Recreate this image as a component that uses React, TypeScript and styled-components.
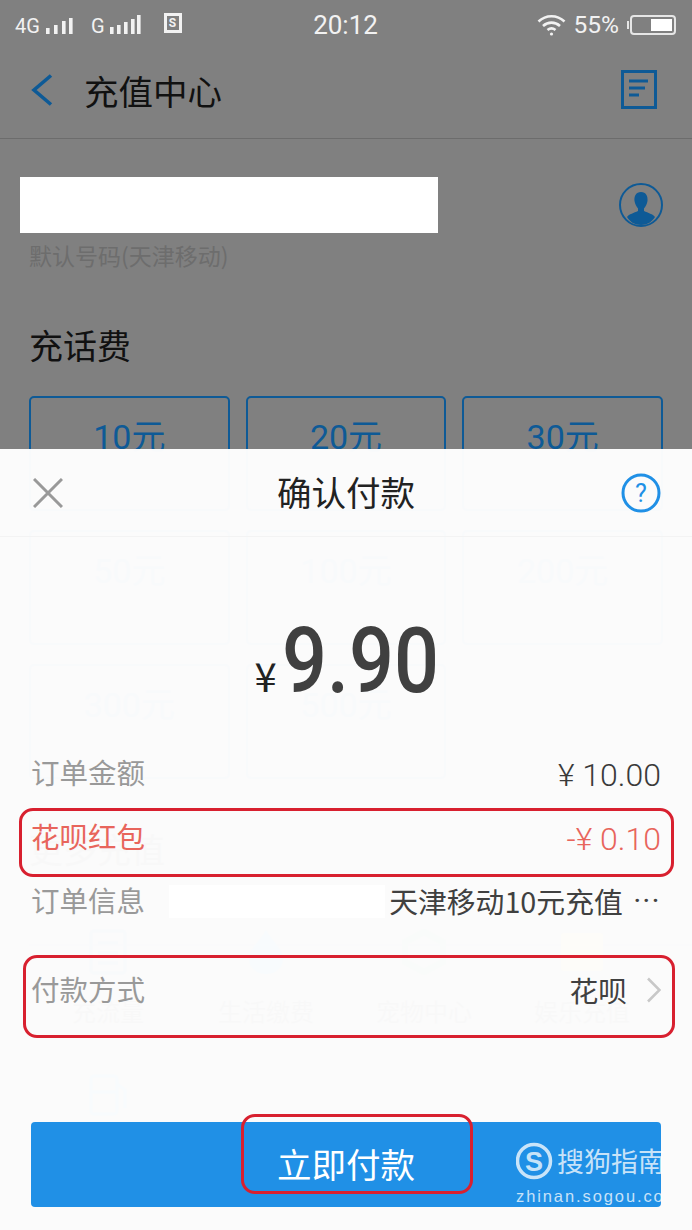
import styled, { createGlobalStyle } from "styled-components";

const cjk = `"Noto Sans CJK SC", "Roboto", sans-serif`;
const latin = `"Roboto", "Noto Sans CJK SC", sans-serif`;

const GlobalStyle = createGlobalStyle`
  html, body {
    margin: 0;
    padding: 0;
    background: #808080;
  }
  * {
    box-sizing: border-box;
  }
`;

const Screen = styled.div`
  position: relative;
  width: 692px;
  height: 1230px;
  overflow: hidden;
  background: #808080;
  font-family: ${cjk};
`;

const StatusBar = styled.div`
  display: grid;
  grid-template-columns: 1fr auto 1fr;
  align-items: center;
  height: 44px;
  padding: 6px 16px 0 15px;
  color: #f2f2f2;
`;

const StatusLeft = styled.div`
  display: flex;
  align-items: center;
`;

const StatusRight = styled.div`
  display: flex;
  align-items: center;
  justify-content: flex-end;
  gap: 8px;
`;

const NetworkLabel = styled.span<{ $gap?: number }>`
  margin-left: ${(p) => p.$gap ?? 0}px;
  margin-top: 1px;
  font-family: ${latin};
  font-size: 20px;
  line-height: 24px;
`;

const Time = styled.span`
  font-family: ${latin};
  font-size: 26px;
  line-height: 30px;
`;

const Percent = styled.span`
  font-family: ${latin};
  font-size: 24.5px;
  line-height: 28px;
`;

const SimBadge = styled.span`
  display: flex;
  align-items: center;
  justify-content: center;
  width: 18px;
  height: 20px;
  margin-left: 23px;
  margin-top: -5px;
  border: 3px solid #f2f2f2;
  font-family: ${latin};
  font-size: 12px;
  font-weight: 700;
  line-height: 1;
`;

const BatteryBody = styled.span`
  display: flex;
  justify-content: flex-end;
  width: 46px;
  height: 20px;
  padding: 2px;
  border: 2px solid #e6e6e6;
  border-radius: 4px;
`;

const BatteryFill = styled.span`
  display: block;
  height: 100%;
  background: #fff;
`;

const Battery = styled.span`
  display: flex;
  align-items: center;
  gap: 1px;
  &::before {
    content: "";
    width: 2px;
    height: 8px;
    background: #e6e6e6;
  }
`;

const Header = styled.div`
  display: flex;
  align-items: center;
  height: 95px;
  padding: 0 35px 3px 31px;
  border-bottom: 1px solid #6c6c6c;
`;

const HeaderTitle = styled.h1`
  flex: 1;
  margin: 0 0 0 31px;
  font-size: 34.5px;
  font-weight: 400;
  line-height: 48px;
  color: #111;
`;

const AccountRow = styled.div`
  display: flex;
  align-items: center;
  justify-content: space-between;
  margin-top: 38px;
  padding: 0 29px 0 20px;
`;

const MaskedNumber = styled.div`
  width: 418px;
  height: 56px;
  background: #fff;
`;

const DefaultHint = styled.p`
  margin: 6px 0 0 29px;
  font-size: 23px;
  line-height: 32px;
  color: #6d6d6d;
`;

const SectionTitle = styled.h2`
  margin: 49px 0 0 29px;
  font-size: 34px;
  font-weight: 400;
  line-height: 50px;
  color: #111;
`;

const AmountGrid = styled.div`
  display: grid;
  grid-template-columns: repeat(3, 1fr);
  grid-auto-rows: 115px;
  gap: 19px 16px;
  margin: 26px 29px 0;
`;

const AmountCard = styled.div`
  display: flex;
  justify-content: center;
  padding-top: 14px;
  border: 2px solid #0e5a96;
  border-radius: 5px;
  font-family: ${latin};
  font-size: 34px;
  line-height: 50px;
  color: #0e5a96;
`;

const MoreTitle = styled(SectionTitle)`
  margin-top: 45px;
`;

const ServiceGrid = styled.div`
  position: relative;
  display: grid;
  grid-template-columns: repeat(4, 158px);
  justify-items: center;
  row-gap: 45px;
  margin: 55px 0 0 29px;

  &::before {
    content: "";
    position: absolute;
    top: 15px;
    left: 0;
    right: -29px;
    height: 2px;
    background: #5f7f9a;
  }
`;

const ServiceItem = styled.div`
  position: relative;
  display: flex;
  flex-direction: column;
  align-items: center;
  gap: 18px;
  font-size: 24px;
  line-height: 36px;
  color: #222;
`;

const Sheet = styled.div`
  position: absolute;
  left: 0;
  right: 0;
  top: 449px;
  bottom: 0;
  display: flex;
  flex-direction: column;
  background: rgba(253, 253, 253, 0.98);
`;

const SheetHeader = styled.div`
  display: grid;
  grid-template-columns: 1fr auto 1fr;
  align-items: center;
  height: 88px;
  padding: 0 31px;
  border-bottom: 1px solid #f3f3f3;
`;

const CloseSlot = styled.div`
  display: flex;
  padding-left: 2px;
`;

const SheetTitle = styled.div`
  padding-bottom: 4px;
  font-size: 34.5px;
  line-height: 48px;
  color: #222;
`;

const HelpSlot = styled.div`
  display: flex;
  justify-content: flex-end;
`;

const Amount = styled.div`
  display: flex;
  align-items: baseline;
  justify-content: center;
  height: 204px;
  padding-top: 70px;
  color: #404040;
`;

const Currency = styled.span`
  font-family: ${cjk};
  font-size: 40px;
  color: #222;
`;

const AmountValue = styled.span`
  display: inline-block;
  width: 156px;
  margin-left: 5px;
  transform: scaleX(0.88);
  transform-origin: left center;
  white-space: nowrap;
  font-family: ${latin};
  font-size: 90px;
  font-weight: 500;
  line-height: 110px;
`;

const Row = styled.div<{ $gap?: number }>`
  display: flex;
  align-items: center;
  justify-content: space-between;
  height: 64px;
  margin-top: ${(p) => p.$gap ?? 0}px;
  padding: 0 31px;
`;

const RowLabel = styled.span<{ $danger?: boolean }>`
  margin-bottom: 2px;
  font-size: 28.5px;
  line-height: 40px;
  color: ${(p) => (p.$danger ? "#e8655c" : "#999")};
`;

const RowValue = styled.span`
  display: flex;
  align-items: center;
  color: #404040;
`;

const Money = styled.span<{ $danger?: boolean }>`
  padding-top: 4px;
  font-family: ${latin};
  font-size: 32px;
  font-weight: 300;
  line-height: 40px;
  color: ${(p) => (p.$danger ? "#e8655c" : "#3a3a3a")};
`;

const MaskedOrder = styled.span`
  width: 216px;
  height: 33px;
  margin-right: 4px;
  background: #fff;
`;

const OrderText = styled.span`
  font-size: 28.8px;
  line-height: 40px;
`;

const Ellipsis = styled.span`
  margin-left: 11px;
  font-family: ${latin};
  font-size: 25px;
  font-weight: 500;
  letter-spacing: 2px;
  line-height: 40px;
`;

const ChevronSlot = styled.span`
  display: flex;
  margin-left: 20px;
`;

const PayButton = styled.button`
  display: flex;
  align-items: center;
  justify-content: center;
  height: 85px;
  margin: 100px 31px 0;
  padding: 0 0 4px;
  border: none;
  border-radius: 4px;
  background: #2090e6;
  color: #fff;
  font-family: ${cjk};
  font-size: 34.5px;
`;

const Callout = styled.div<{ $left: number; $top: number; $width: number; $height: number }>`
  position: absolute;
  left: ${(p) => p.$left}px;
  top: ${(p) => p.$top}px;
  width: ${(p) => p.$width}px;
  height: ${(p) => p.$height}px;
  border: 3px solid #d8202f;
  border-radius: 14px;
`;

const Watermark = styled.div`
  position: absolute;
  left: 516px;
  top: 1142px;
  width: 150px;
  overflow: hidden;
  color: rgba(255, 255, 255, 0.76);
`;

const WatermarkBrand = styled.div`
  display: flex;
  align-items: center;
  gap: 4px;
  white-space: nowrap;
  font-size: 27px;
  line-height: 38px;
`;

const WatermarkUrl = styled.div`
  margin-top: 6px;
  white-space: nowrap;
  font-family: "Liberation Sans", sans-serif;
  font-size: 16.5px;
  letter-spacing: 1.9px;
  line-height: 20px;
`;

const Signal = ({ bars }: { bars: number[][] }) => (
  <svg width="36" height="24" viewBox="0 0 36 24" fill="#f2f2f2">
    {bars.map(([x, h]) => (
      <rect key={x} x={x} y={21 - h} width="3.6" height={h} />
    ))}
  </svg>
);

const Wifi = () => (
  <svg width="29" height="24" viewBox="0 0 29 24" fill="none" stroke="#f2f2f2" strokeWidth="2.6">
    <path d="M1.5 8.5C9 1.5 20 1.5 27.5 8.5" />
    <path d="M6 13C11 8.5 18 8.5 23 13" />
    <path d="M10.5 17C13 15 16 15 18.5 17" />
    <circle cx="14.5" cy="21" r="1.6" fill="#f2f2f2" stroke="none" />
  </svg>
);

const BackIcon = () => (
  <svg width="22" height="32" viewBox="0 0 22 32" fill="none" stroke="#0e5a96" strokeWidth="3.6">
    <path d="M20 1.5L3 16L20 30.5" />
  </svg>
);

const RecordIcon = () => (
  <svg width="36" height="39" viewBox="0 0 36 39" fill="none" stroke="#0e5a96">
    <rect x="1.5" y="1.5" width="33" height="36" strokeWidth="3" />
    <path d="M8 11H27M8 18H24M8 25H18" strokeWidth="3" />
  </svg>
);

const ContactIcon = () => (
  <svg width="44" height="44" viewBox="0 0 44 44">
    <circle cx="22" cy="22" r="21" fill="none" stroke="#0e5a96" strokeWidth="2" />
    <path
      d="M22 9C17 9 15 13 15.5 18C16 21 17.5 24 19 25.5V28C15 30 10 31 8 34C11 39 16 42 22 42C28 42 33 39 36 34C34 31 29 30 25 28V25.5C26.5 24 28 21 28.5 18C29 13 27 9 22 9Z"
      fill="#0e5a96"
    />
  </svg>
);

const CloseIcon = () => (
  <svg width="30" height="30" viewBox="0 0 30 30" fill="none" stroke="#999" strokeWidth="3">
    <path d="M1 1L29 29M29 1L1 29" />
  </svg>
);

const HelpIcon = () => (
  <svg width="40" height="40" viewBox="0 0 40 40">
    <circle cx="20" cy="20" r="18" fill="none" stroke="#2090e6" strokeWidth="3" />
    <text x="20" y="29" textAnchor="middle" fontFamily="Roboto, sans-serif" fontSize="25" fill="#2090e6">
      ?
    </text>
  </svg>
);

const ChevronIcon = () => (
  <svg width="14" height="26" viewBox="0 0 14 26" fill="none" stroke="#c8c8c8" strokeWidth="2.6">
    <path d="M1 1.5L12.5 13L1 24.5" />
  </svg>
);

const PhoneGlyph = () => (
  <svg width="40" height="46" viewBox="0 0 40 46" fill="none" stroke="#0e5a96" strokeWidth="3">
    <rect x="3" y="2" width="34" height="42" rx="3" />
    <path d="M10 14H30M10 24H30M10 34H30" />
  </svg>
);

const DropGlyph = () => (
  <svg width="40" height="46" viewBox="0 0 40 46" fill="#2090e6">
    <path d="M20 1C14 12 3 20 3 30C3 39 11 45 20 45C29 45 37 39 37 30C37 20 26 12 20 1Z" />
  </svg>
);

const ShieldGlyph = () => (
  <svg width="44" height="46" viewBox="0 0 44 46" fill="none" stroke="#3f9a6a" strokeWidth="6">
    <path d="M22 3L41 13V33L22 43L3 33V13Z" />
  </svg>
);

const TicketGlyph = () => (
  <svg width="46" height="46" viewBox="0 0 46 46" fill="#e8c23c">
    <rect x="2" y="4" width="42" height="38" rx="3" />
  </svg>
);

const FuelGlyph = () => (
  <svg width="40" height="42" viewBox="0 0 40 42" fill="none" stroke="#2090e6" strokeWidth="3">
    <rect x="3" y="2" width="26" height="38" rx="3" />
    <path d="M29 10L37 16V34M3 18H29" />
  </svg>
);

const BrandMark = () => (
  <svg width="37" height="38" viewBox="0 0 37 38">
    <circle cx="18" cy="19" r="16.5" fill="none" stroke="currentColor" strokeWidth="3.5" />
    <text x="18" y="28.5" textAnchor="middle" fontFamily="Liberation Sans, sans-serif" fontWeight="700" fontSize="27" fill="currentColor">
      S
    </text>
  </svg>
);

const amounts = ["10元", "20元", "30元", "50元", "100元", "200元", "300元", "500元"];

const services = [
  { label: "充流量", icon: <PhoneGlyph /> },
  { label: "生活缴费", icon: <DropGlyph /> },
  { label: "宠物中心", icon: <ShieldGlyph /> },
  { label: "娱乐充值", icon: <TicketGlyph /> },
  { label: "", icon: <FuelGlyph /> },
];

const App = () => (
  <Screen>
    <GlobalStyle />
    <StatusBar>
      <StatusLeft>
        <NetworkLabel>4G</NetworkLabel>
        <Signal bars={[[6, 6], [14, 9], [22, 13], [29, 16]]} />
        <NetworkLabel $gap={15}>G</NetworkLabel>
        <Signal bars={[[5, 7], [12, 9], [19, 12], [26, 15], [32, 19]]} />
        <SimBadge>S</SimBadge>
      </StatusLeft>
      <Time>20:12</Time>
      <StatusRight>
        <Wifi />
        <Percent>55%</Percent>
        <Battery>
          <BatteryBody>
            <BatteryFill style={{ width: "55%" }} />
          </BatteryBody>
        </Battery>
      </StatusRight>
    </StatusBar>

    <Header>
      <BackIcon />
      <HeaderTitle>充值中心</HeaderTitle>
      <RecordIcon />
    </Header>

    <AccountRow>
      <MaskedNumber />
      <ContactIcon />
    </AccountRow>
    <DefaultHint>默认号码(天津移动)</DefaultHint>

    <SectionTitle>充话费</SectionTitle>
    <AmountGrid>
      {amounts.map((a) => (
        <AmountCard key={a}>{a}</AmountCard>
      ))}
    </AmountGrid>

    <MoreTitle>更多充值</MoreTitle>
    <ServiceGrid>
      {services.map((s, i) => (
        <ServiceItem key={i}>
          {s.icon}
          {s.label && <span>{s.label}</span>}
        </ServiceItem>
      ))}
    </ServiceGrid>

    <Sheet>
      <SheetHeader>
        <CloseSlot>
          <CloseIcon />
        </CloseSlot>
        <SheetTitle>确认付款</SheetTitle>
        <HelpSlot>
          <HelpIcon />
        </HelpSlot>
      </SheetHeader>
      <Amount>
        <Currency>¥</Currency>
        <AmountValue>9.90</AmountValue>
      </Amount>
      <Row>
        <RowLabel>订单金额</RowLabel>
        <Money>¥ 10.00</Money>
      </Row>
      <Row>
        <RowLabel $danger>花呗红包</RowLabel>
        <Money $danger>-¥ 0.10</Money>
      </Row>
      <Row>
        <RowLabel>订单信息</RowLabel>
        <RowValue>
          <MaskedOrder />
          <OrderText>天津移动10元充值</OrderText>
          <Ellipsis>···</Ellipsis>
        </RowValue>
      </Row>
      <Row $gap={25}>
        <RowLabel>付款方式</RowLabel>
        <RowValue>
          <OrderText>花呗</OrderText>
          <ChevronSlot>
            <ChevronIcon />
          </ChevronSlot>
        </RowValue>
      </Row>
      <PayButton>立即付款</PayButton>
    </Sheet>

    <Callout $left={19} $top={808} $width={655} $height={69} />
    <Callout $left={23} $top={955} $width={652} $height={83} />
    <Callout $left={241} $top={1114} $width={232} $height={80} />

    <Watermark>
      <WatermarkBrand>
        <BrandMark />
        <span>搜狗指南</span>
      </WatermarkBrand>
      <WatermarkUrl>zhinan.sogou.com</WatermarkUrl>
    </Watermark>
  </Screen>
);

export default App;
